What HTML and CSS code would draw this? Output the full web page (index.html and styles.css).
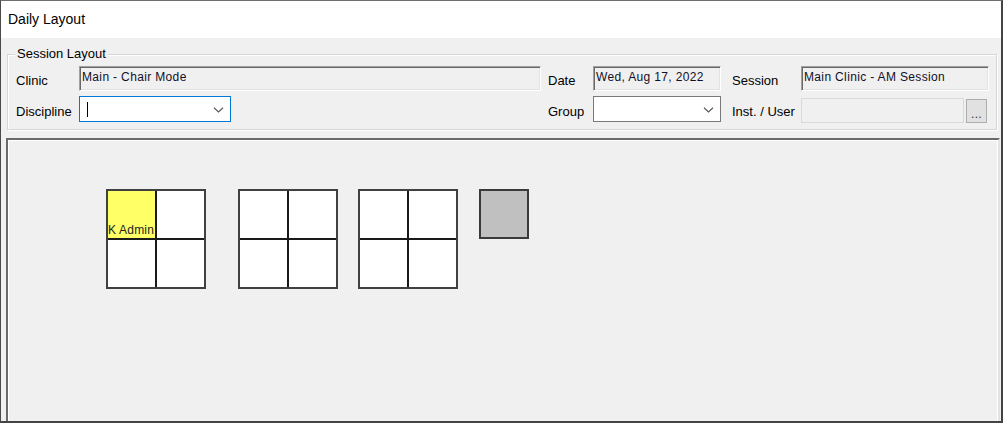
FILE: index.html
```html
<!DOCTYPE html>
<html>
<head>
<meta charset="utf-8">
<title>Daily Layout</title>
<link rel="stylesheet" href="styles.css">
</head>
<body>
<div class="window">
  <div class="titlebar">Daily Layout</div>
  <div class="group">
    <span class="legend">Session Layout</span>
    <div class="fields">
      <div class="label">Clinic</div>
      <div class="cell"><div class="ro wide">Main - Chair Mode</div></div>
      <div class="label">Date</div>
      <div class="cell"><div class="ro mid">Wed, Aug 17, 2022</div></div>
      <div class="label">Session</div>
      <div class="cell"><div class="ro full">Main Clinic - AM Session</div></div>

      <div class="label low">Discipline</div>
      <div class="cell"><div class="combo focus disc"><span class="caret"></span><svg class="chev" width="11" height="6" viewBox="0 0 11 6"><path d="M1 0.8 L5.5 5 L10 0.8" fill="none" stroke="#5a5a5a" stroke-width="1.2"/></svg></div></div>
      <div class="label low">Group</div>
      <div class="cell"><div class="combo mid"><span></span><svg class="chev" width="11" height="6" viewBox="0 0 11 6"><path d="M1 0.8 L5.5 5 L10 0.8" fill="none" stroke="#5a5a5a" stroke-width="1.2"/></svg></div></div>
      <div class="label low">Inst. / User</div>
      <div class="cell inst"><div class="disabled"></div><div class="btn">...</div></div>
    </div>
  </div>
  <div class="canvas">
    <div class="chair c1">
      <div class="seat yellow"><span class="name">K Admin</span></div>
      <div class="seat"></div>
      <div class="seat"></div>
      <div class="seat"></div>
    </div>
    <div class="chair c2">
      <div class="seat"></div><div class="seat"></div><div class="seat"></div><div class="seat"></div>
    </div>
    <div class="chair c3">
      <div class="seat"></div><div class="seat"></div><div class="seat"></div><div class="seat"></div>
    </div>
    <div class="single c4"></div>
  </div>
</div>
</body>
</html>
```

FILE: styles.css
```css
* { box-sizing: border-box; }
html, body { margin: 0; padding: 0; }
body {
  font-family: "Liberation Sans", Arial, sans-serif;
  color: #000;
  background: #f0f0f0;
}
.window {
  width: 1003px;
  height: 423px;
  display: flex;
  flex-direction: column;
  background: #f0f0f0;
  border-top: 1px solid #6e6e6e;
  border-left: 1px solid #4a4a4a;
  border-right: 2px solid #444;
  border-bottom: 2px solid #444;
  overflow: hidden;
}
.titlebar {
  height: 37px;
  flex: none;
  background: #fff;
  font-size: 14px;
  line-height: 37px;
  padding-left: 7px;
}
.group {
  position: relative;
  flex: none;
  margin: 16px 4px 0 6px;
  height: 76px;
  border: 1px solid #d6d6d6;
  box-shadow: inset 1px 1px 0 #fff, 1px 1px 0 #fff;
}
.legend {
  position: absolute;
  left: 7px;
  top: -9px;
  padding: 0 2px;
  background: #f0f0f0;
  font-size: 13px;
  line-height: 15px;
}
.fields {
  display: grid;
  grid-template-columns: 63px 469px 45px 139px 69px 188px;
  grid-template-rows: 25px 26px;
  row-gap: 5px;
  padding: 11px 0 0 8px;
}
.label {
  font-size: 13px;
  line-height: 15px;
  padding-top: 7px;
  white-space: nowrap;
}
.label.low { padding-top: 8px; }
.cell { display: flex; }
.ro {
  height: 25px;
  background: #f0f0f0;
  border: 1px solid;
  border-color: #a0a0a0 #fff #fff #a0a0a0;
  box-shadow: inset 1px 1px 0 #696969, inset -1px -1px 0 #e3e3e3;
  font-size: 12px;
  letter-spacing: 0.35px;
  line-height: 14px;
  padding: 3px 0 0 2px;
  white-space: nowrap;
  overflow: hidden;
  color: #101028;
}
.wide { width: 462px; }
.mid { width: 128px; }
.full { width: 188px; }
.combo {
  height: 26px;
  background: #fff;
  border: 1px solid #7a7a7a;
  display: flex;
  align-items: center;
  justify-content: space-between;
  padding-right: 6px;
}
.combo.focus { border-color: #0078d7; }
.disc { width: 152px; }
.caret {
  width: 1px;
  height: 15px;
  background: #000;
  margin-left: 7px;
}
.chev { display: block; margin-top: 1px; }
.inst { align-items: flex-start; }
.disabled {
  width: 163px;
  height: 25px;
  margin-top: 2px;
  background: #f0f0f0;
  border: 1px solid #d9d9d9;
}
.btn {
  width: 21px;
  height: 24px;
  margin: 3px 0 0 2px;
  background: #e1e1e1;
  border: 1px solid #adadad;
  font-size: 12px;
  line-height: 14px;
  padding-top: 7px;
  text-align: center;
  color: #333;
  letter-spacing: 0.3px;
}
.canvas {
  position: relative;
  flex: 1;
  margin: 8px 1px 0 5px;
  border-top: 2px solid #6a6a6a;
  border-left: 2px solid #6a6a6a;
  border-right: 2px solid #e3e3e3;
  box-shadow: inset 1px 1px 0 #fff, inset -1px 0 0 #fff;
}
.chair {
  position: absolute;
  top: 49px;
  width: 100px;
  height: 100px;
  border: 2px solid #404040;
  background: #1a1a1a;
  display: grid;
  grid-template-columns: 47px 47px;
  grid-template-rows: 47px 47px;
  gap: 2px;
}
.c1 { left: 98px; }
.c2 { left: 230px; }
.c3 { left: 350px; }
.seat {
  background: #fff;
  display: flex;
  align-items: flex-end;
  overflow: visible;
}
.seat.yellow { background: #ffff66; }
.name {
  font-size: 12px;
  line-height: 13px;
  letter-spacing: 0.2px;
  white-space: nowrap;
  color: #222;
  padding: 0 0 1px 0;
  position: relative;
  z-index: 1;
}
.single {
  position: absolute;
  top: 49px;
  left: 471px;
  width: 50px;
  height: 50px;
  border: 2px solid #3a3a3a;
  background: #c0c0c0;
}
```
